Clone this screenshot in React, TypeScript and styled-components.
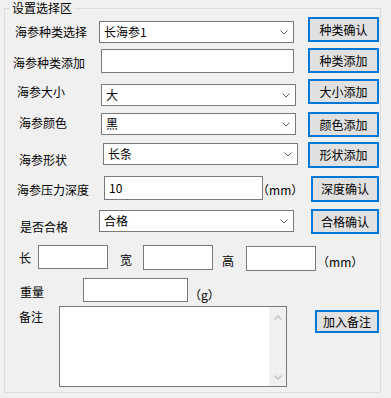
import { FC } from "react";
import styled, { createGlobalStyle } from "styled-components";

const GlobalStyle = createGlobalStyle`
  body {
    margin: 0;
    background: #f0f0f0;
    font-family: "Noto Sans CJK SC", "Noto Sans", sans-serif;
    font-size: 12px;
    color: #000;
  }
`;

const Page = styled.div`
  width: 391px;
  height: 398px;
  box-sizing: border-box;
  padding: 8px 0 0 4px;
  background: #f0f0f0;
`;

const GroupBox = styled.div`
  position: relative;
  width: 377px;
  height: 385px;
  box-sizing: border-box;
  border: 1px solid #dcdcdc;
  padding-top: 7px;
`;

// caption sits over the top border line
const Legend = styled.span`
  position: absolute;
  top: -9px;
  left: 5px;
  padding: 0 2px;
  background: #f0f0f0;
  line-height: 16px;
`;

type Offset = { $ml: number; $mt?: number };

const Row = styled.div<{ $h?: number }>`
  display: flex;
  align-items: flex-start;
  height: ${(p) => (p.$h ? `${p.$h}px` : "auto")};
`;

const Label = styled.span<Offset>`
  flex: none;
  margin-left: ${(p) => p.$ml}px;
  margin-top: ${(p) => p.$mt ?? 0}px;
  line-height: 16px;
  white-space: nowrap;
`;

const Unit = styled(Label)<{ $w: number }>`
  width: ${(p) => p.$w}px;
`;

type BoxProps = Offset & { $w: number; $h: number };

const Field = styled.div<BoxProps>`
  flex: none;
  box-sizing: border-box;
  width: ${(p) => p.$w}px;
  height: ${(p) => p.$h}px;
  margin-left: ${(p) => p.$ml}px;
  margin-top: ${(p) => p.$mt ?? 0}px;
  border: 1px solid #7a7a7a;
  background: #fff;
  display: flex;
  align-items: center;
  padding: 0 5px 0 4px;
  line-height: 16px;
`;

const ComboBox = styled(Field)`
  justify-content: space-between;
`;

const Chevron = styled.svg`
  width: 8px;
  height: 5px;
  flex: none;
`;

const Memo = styled(Field)`
  padding: 0;
  align-items: stretch;
  justify-content: flex-end;
`;

const ScrollBar = styled.div`
  width: 17px;
  background: #f0f0f0;
  display: flex;
  flex-direction: column;
  justify-content: space-between;
  align-items: center;
  padding: 8px 0 6px;
`;

const Button = styled.button<BoxProps>`
  flex: none;
  box-sizing: border-box;
  width: ${(p) => p.$w}px;
  height: ${(p) => p.$h}px;
  margin-left: ${(p) => p.$ml}px;
  margin-top: ${(p) => p.$mt ?? 0}px;
  padding: 0;
  border: 2px solid #0078d7;
  background: #e1e1e1;
  font-family: inherit;
  font-size: 12px;
  color: #000;
  line-height: 16px;
`;

const Combo: FC<BoxProps & { value: string }> = ({ value, ...rest }) => (
  <ComboBox {...rest}>
    <span>{value}</span>
    <Chevron viewBox="0 0 8 5">
      <path d="M0.5 0.5 L4 4 L7.5 0.5" fill="none" stroke="#606060" strokeWidth="1" />
    </Chevron>
  </ComboBox>
);

const Arrow: FC<{ up?: boolean }> = ({ up }) => (
  <Chevron viewBox="0 0 8 5">
    <path
      d={up ? "M0.5 4.5 L4 1 L7.5 4.5" : "M0.5 0.5 L4 4 L7.5 0.5"}
      fill="none"
      stroke="#c2c2c2"
      strokeWidth="1.4"
    />
  </Chevron>
);

const App: FC = () => (
  <Page>
    <GlobalStyle />
    <GroupBox>
      <Legend>设置选择区</Legend>

      <Row $h={32}>
        <Label $ml={10} $mt={8}>海参种类选择</Label>
        <Combo $ml={12} $mt={5} $w={195} $h={22} value="长海参1" />
        <Button $ml={14} $mt={1} $w={71} $h={25}>种类确认</Button>
      </Row>

      <Row $h={31}>
        <Label $ml={8} $mt={7}>海参种类添加</Label>
        <Field $ml={16} $mt={1} $w={193} $h={24} />
        <Button $ml={14} $w={71} $h={25}>种类添加</Button>
      </Row>

      <Row $h={32}>
        <Label $ml={12} $mt={5}>海参大小</Label>
        <Combo $ml={36} $mt={5} $w={195} $h={22} value="大" />
        <Button $ml={12} $w={71} $h={25}>大小添加</Button>
      </Row>

      <Row $h={31}>
        <Label $ml={14} $mt={4}>海参颜色</Label>
        <Combo $ml={34} $mt={2} $w={195} $h={22} value="黑" />
        <Button $ml={12} $mt={1} $w={71} $h={25}>颜色添加</Button>
      </Row>

      <Row $h={34}>
        <Label $ml={14} $mt={10}>海参形状</Label>
        <Combo $ml={36} $mt={1} $w={195} $h={22} value="长条" />
        <Button $ml={10} $w={71} $h={26}>形状添加</Button>
      </Row>

      <Row $h={33}>
        <Label $ml={12} $mt={6}>海参压力深度</Label>
        <Field $ml={15} $w={159} $h={24}>10</Field>
        <Unit $ml={-6} $mt={6} $w={54}>（mm）</Unit>
        <Button $ml={0} $w={68} $h={26}>深度确认</Button>
      </Row>

      <Row $h={36}>
        <Label $ml={15} $mt={10}>是否合格</Label>
        <Combo $ml={31} $mt={1} $w={195} $h={22} value="合格" />
        <Button $ml={17} $w={68} $h={25}>合格确认</Button>
      </Row>

      <Row $h={32}>
        <Label $ml={14} $mt={5}>长</Label>
        <Field $ml={7} $w={70} $h={24} />
        <Label $ml={12} $mt={7}>宽</Label>
        <Field $ml={11} $w={70} $h={25} />
        <Label $ml={9} $mt={8}>高</Label>
        <Field $ml={12} $mt={1} $w={70} $h={25} />
        <Unit $ml={1} $mt={9} $w={54}>（mm）</Unit>
      </Row>

      <Row $h={28}>
        <Label $ml={15} $mt={7}>重量</Label>
        <Field $ml={39} $mt={1} $w={105} $h={24} />
        <Unit $ml={1} $mt={10} $w={40}>（g）</Unit>
      </Row>

      <Row>
        <Label $ml={14} $mt={4}>备注</Label>
        <Memo $ml={16} $mt={1} $w={228} $h={81}>
          <ScrollBar>
            <Arrow up />
            <Arrow />
          </ScrollBar>
        </Memo>
        <Button $ml={28} $mt={5} $w={64} $h={23}>加入备注</Button>
      </Row>
    </GroupBox>
  </Page>
);

export default App;
